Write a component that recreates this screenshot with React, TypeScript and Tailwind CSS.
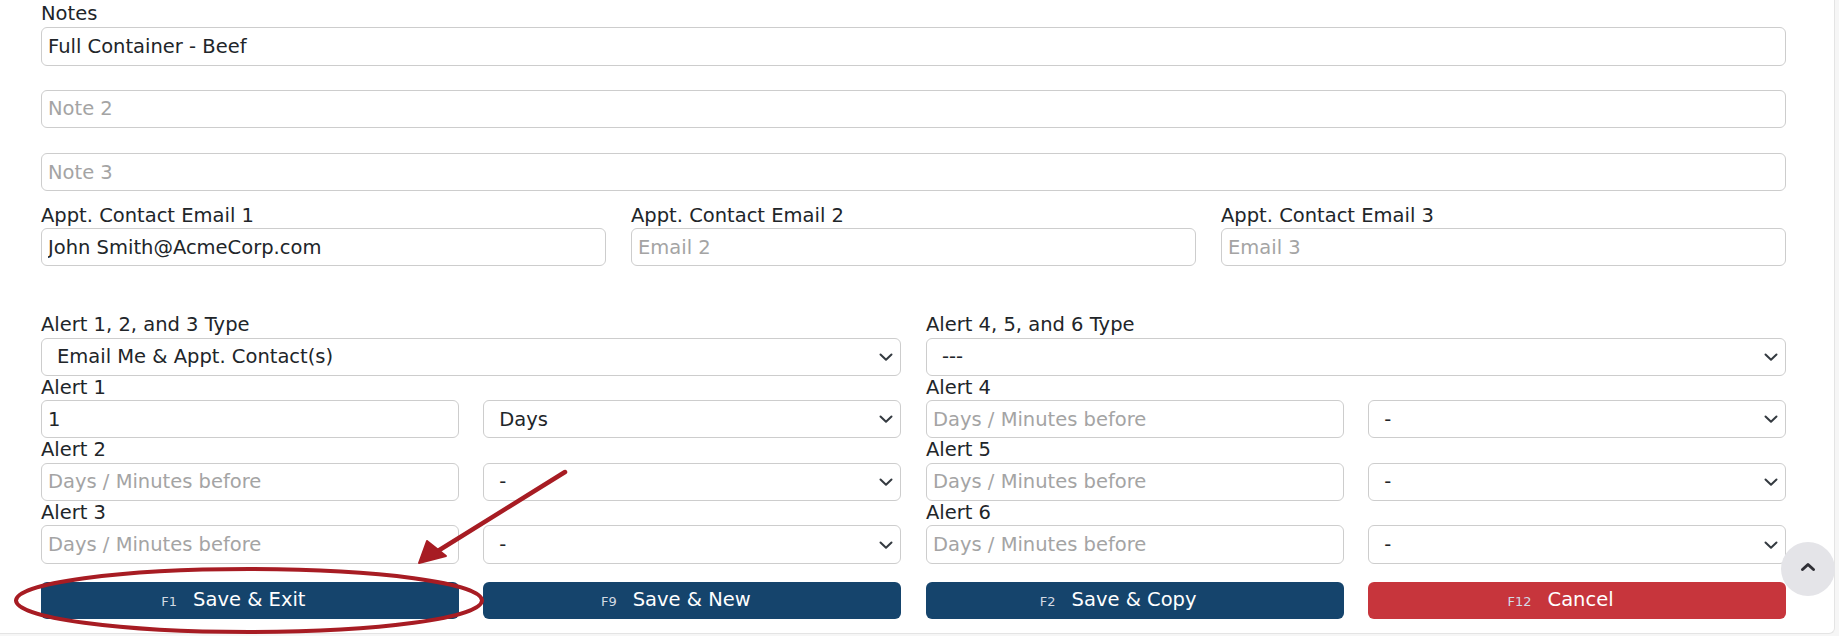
import { ReactNode } from 'react';

const font = { fontFamily: '"DejaVu Sans", Verdana, sans-serif' };

function Label({ children }: { children: ReactNode }) {
  return <div className="text-[19.5px] leading-[24.3px] text-[#212529] whitespace-nowrap">{children}</div>;
}

function TextBox({ value, placeholder }: { value?: string; placeholder?: string }) {
  return (
    <input
      readOnly
      defaultValue={value}
      placeholder={placeholder}
      style={font}
      className="block w-full h-[38.3px] px-[6px] rounded-[6px] border border-[#cdcdcd] bg-white text-[19.5px] text-[#212529] placeholder:text-[#a4a4a4] outline-none"
    />
  );
}

function Chevron() {
  return (
    <svg
      className="absolute right-[8px] top-1/2 -translate-y-1/2 pointer-events-none"
      width="14"
      height="10"
      viewBox="0 0 14 10"
    >
      <path d="M1.5 2.5 L7 7.8 L12.5 2.5" fill="none" stroke="#343a40" strokeWidth="2" strokeLinecap="round" strokeLinejoin="round" />
    </svg>
  );
}

function SelectBox({ value }: { value: string }) {
  return (
    <div className="relative">
      <select
        defaultValue={value}
        style={font}
        className="block w-full h-[38.3px] pl-[15px] pr-8 appearance-none rounded-[6px] border border-[#cdcdcd] bg-white text-[19.5px] text-[#212529] outline-none"
      >
        <option value={value}>{value}</option>
      </select>
      <Chevron />
    </div>
  );
}

function AlertRow({ label, value, unit }: { label: string; value?: string; unit: string }) {
  return (
    <>
      <Label>{label}</Label>
      <div className="grid grid-cols-2 gap-x-[24.5px]">
        <TextBox value={value} placeholder="Days / Minutes before" />
        <SelectBox value={unit} />
      </div>
    </>
  );
}

function ActionButton({ fkey, label, red }: { fkey: string; label: string; red?: boolean }) {
  return (
    <button
      style={font}
      className={
        'h-[37px] rounded-[6px] flex items-baseline justify-center pt-[7px] pr-[33px] text-white ' +
        (red ? 'bg-[#c7353c]' : 'bg-[#15446c]')
      }
    >
      <span className="text-[13px] text-[#d3dae3] mr-[16px]">{fkey}</span>
      <span className="text-[19.5px] leading-[22px]">{label}</span>
    </button>
  );
}

export default function App() {
  return (
    <div style={font} className="relative w-[1839px] h-[636px] overflow-hidden bg-[#f6f6f6]">
      <div className="w-[1835px] h-[634px] bg-white border-r border-b border-[#e4e4e4] rounded-br-[6px] pl-[41px] pr-[48px] pt-[2px]">
        <Label>Notes</Label>
        <div className="mt-[1px]">
          <TextBox value="Full Container - Beef" />
        </div>
        <div className="mt-[24px]">
          <TextBox placeholder="Note 2" />
        </div>
        <div className="mt-[25px]">
          <TextBox placeholder="Note 3" />
        </div>

        <div className="mt-[12.5px] grid grid-cols-3 gap-x-[25px]">
          <div>
            <Label>Appt. Contact Email 1</Label>
            <TextBox value="John Smith@AcmeCorp.com" />
          </div>
          <div>
            <Label>Appt. Contact Email 2</Label>
            <TextBox placeholder="Email 2" />
          </div>
          <div>
            <Label>Appt. Contact Email 3</Label>
            <TextBox placeholder="Email 3" />
          </div>
        </div>

        <div className="mt-[47px] grid grid-cols-2 gap-x-[25px]">
          <div>
            <Label>Alert 1, 2, and 3 Type</Label>
            <SelectBox value="Email Me & Appt. Contact(s)" />
            <AlertRow label="Alert 1" value="1" unit="Days" />
            <AlertRow label="Alert 2" unit="-" />
            <AlertRow label="Alert 3" unit="-" />
          </div>
          <div>
            <Label>Alert 4, 5, and 6 Type</Label>
            <SelectBox value="---" />
            <AlertRow label="Alert 4" unit="-" />
            <AlertRow label="Alert 5" unit="-" />
            <AlertRow label="Alert 6" unit="-" />
          </div>
        </div>

        <div className="mt-[18px] grid grid-cols-4 gap-x-[24.5px]">
          <ActionButton fkey="F1" label="Save & Exit" />
          <ActionButton fkey="F9" label="Save & New" />
          <ActionButton fkey="F2" label="Save & Copy" />
          <ActionButton fkey="F12" label="Cancel" red />
        </div>
      </div>

      {/* scroll to top */}
      <button className="absolute left-[1781px] top-[542px] w-[54px] h-[54px] rounded-full bg-[#e4e4e8] flex items-center justify-center">
        <svg width="16" height="12" viewBox="0 0 16 12" className="-mt-[5px]">
          <path d="M2.5 8.5 L8 3.5 L13.5 8.5" fill="none" stroke="#2f2f36" strokeWidth="3" strokeLinecap="round" strokeLinejoin="round" />
        </svg>
      </button>

      {/* annotation */}
      <svg className="absolute left-0 top-0 pointer-events-none" width="1839" height="636" viewBox="0 0 1839 636">
        <ellipse cx="249" cy="600.5" rx="233" ry="31.5" fill="none" stroke="#a71c23" strokeWidth="4" />
        <line x1="565" y1="472" x2="433" y2="554" stroke="#a71c23" strokeWidth="4.5" strokeLinecap="round" />
        <polygon points="419,563 427,541 446,556" fill="#a71c23" stroke="#a71c23" strokeWidth="2" strokeLinejoin="round" />
      </svg>
    </div>
  );
}
